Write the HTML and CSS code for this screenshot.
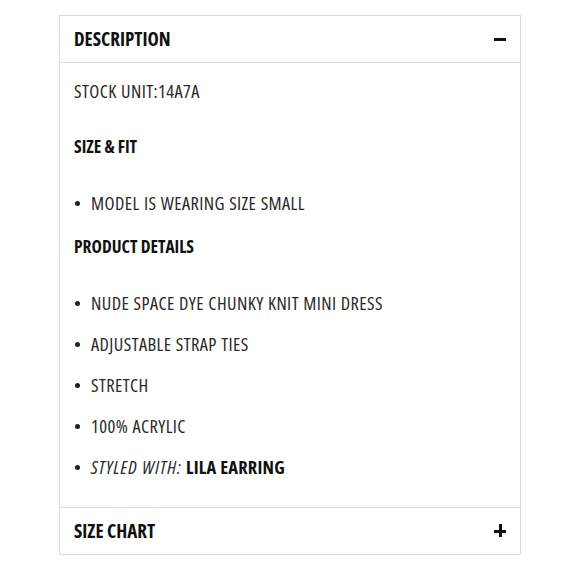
FILE: index.html
```html
<!DOCTYPE html>
<html lang="en">
<head>
    <meta charset="UTF-8">
    <title>Description</title>
    <link rel="stylesheet" href="styles.css">
</head>
<body>
    <div class="accordion">
        <div class="acc-head">
            <span>DESCRIPTION</span>
            <span class="icon minus"></span>
        </div>
        <div class="acc-body">
            <p>STOCK UNIT:14A7A</p>
            <h3>SIZE &amp; FIT</h3>
            <ul>
                <li>MODEL IS WEARING SIZE SMALL</li>
            </ul>
            <h3>PRODUCT DETAILS</h3>
            <ul class="last">
                <li>NUDE SPACE DYE CHUNKY KNIT MINI DRESS</li>
                <li>ADJUSTABLE STRAP TIES</li>
                <li>STRETCH</li>
                <li>100% ACRYLIC</li>
                <li><em>STYLED WITH:</em> <strong>LILA EARRING</strong></li>
            </ul>
        </div>
        <div class="acc-head closed">
            <span>SIZE CHART</span>
            <span class="icon plus"></span>
        </div>
    </div>
</body>
</html>
```

FILE: styles.css
```css
* {
    margin: 0;
    padding: 0;
    box-sizing: border-box;
}

body {
    background: #ffffff;
    color: #2a2a2a;
    font-family: "Open Sans", sans-serif;
    font-stretch: 75%;
    padding: 15px 59px 0 59px;
}

.accordion {
    border: 1px solid #dcdcdc;
}

.acc-head {
    height: 47px;
    padding: 0 14px;
    display: flex;
    justify-content: space-between;
    align-items: center;
    font-size: 19px;
    font-weight: bold;
    color: #111;
    border-bottom: 1px solid #dcdcdc;
}

.acc-head.closed {
    border-bottom: none;
    border-top: 1px solid #dcdcdc;
}

.icon {
    position: relative;
    width: 12px;
    height: 12px;
}

.icon::before,
.icon::after {
    content: "";
    position: absolute;
    background: #111;
}

.icon::before {
    left: 0;
    top: 5px;
    width: 12px;
    height: 3px;
}

.plus::after {
    left: 5px;
    top: -1px;
    width: 3px;
    height: 13px;
}

.acc-body {
    padding: 18px 14px 30px 14px;
    font-size: 18.4px;
    line-height: 20px;
    letter-spacing: 0.4px;
    word-spacing: 0.5px;
}

.acc-body p {
    margin-bottom: 35px;
}

.acc-body h3 {
    font-size: 17.5px;
    font-weight: bold;
    letter-spacing: 0;
    word-spacing: 0;
    color: #111;
}

.acc-body ul {
    list-style: none;
    margin: 37px 0 23px 0;
}

.acc-body ul.last {
    margin-bottom: 0;
}

.acc-body li {
    position: relative;
    padding-left: 17px;
}

.acc-body li + li {
    margin-top: 21px;
}

.acc-body li::before {
    content: "";
    position: absolute;
    left: 1px;
    top: 8px;
    width: 5px;
    height: 5px;
    border-radius: 50%;
    background: #222;
}

.acc-body em {
    letter-spacing: 1px;
}

.acc-body strong {
    color: #111;
    letter-spacing: 0.2px;
}
```
